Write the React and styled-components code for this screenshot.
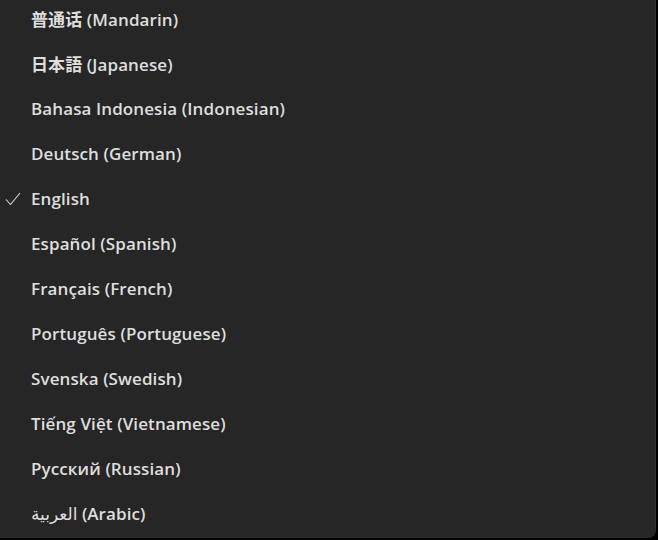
import React from "react";
import styled, { createGlobalStyle } from "styled-components";

const Global = createGlobalStyle`
  html, body { margin: 0; padding: 0; background: #000; overflow: hidden; }
  body { font-family: "Open Sans", "DejaVu Sans", "Noto Sans CJK SC", sans-serif; }
`;

const Panel = styled.ul`
  list-style: none;
  margin: -4px 0 0 0;
  padding: 0;
  width: 656px;
  height: 542px;
  box-sizing: border-box;
  background: #262626;
  border-radius: 0 0 8px 0;
  border-right: 1px solid #2e2e2e;
  border-bottom: 1px solid #2e2e2e;
`;

const Item = styled.li`
  position: relative;
  height: 45px;
  display: flex;
  align-items: center;
  padding-left: 31px;
  color: #dedede;
  font-size: 17px;
  font-weight: 600;
  font-family: ${(p) => p.$font || `"Open Sans", "DejaVu Sans", sans-serif`};
  letter-spacing: 0.1px;
  white-space: nowrap;
`;

const Native = styled.span`
  font-weight: ${(p) => (p.$light ? 400 : "inherit")};
`;

const Check = styled.svg`
  position: absolute;
  left: 5px;
  top: 50%;
  transform: translateY(-50%);
  width: 16px;
  height: 16px;
`;

const items = [
  { native: "普通话", en: "(Mandarin)", font: `"Open Sans", "Noto Sans CJK SC", sans-serif` },
  { native: "日本語", en: "(Japanese)", font: `"Open Sans", "Noto Sans CJK JP", sans-serif` },
  { native: "Bahasa Indonesia", en: "(Indonesian)" },
  { native: "Deutsch", en: "(German)" },
  { native: "English", checked: true },
  { native: "Español", en: "(Spanish)" },
  { native: "Français", en: "(French)" },
  { native: "Português", en: "(Portuguese)" },
  { native: "Svenska", en: "(Swedish)" },
  { native: "Tiếng Việt", en: "(Vietnamese)" },
  { native: "Русский", en: "(Russian)" },
  { native: "العربية", en: "(Arabic)", light: true },
];

export default function App() {
  return (
    <>
      <Global />
      <Panel>
        {items.map((it) => (
          <Item key={it.native} $font={it.font}>
            {it.checked && (
              <Check viewBox="0 0 16 16" fill="none">
                <path d="M1 8.5 L5.5 13.5 L15 2" stroke="#d8d8d8" strokeWidth="1.1" />
              </Check>
            )}
            <span dir="ltr">
              <Native $light={it.light}>{it.native}</Native>
              {it.en ? ` ${it.en}` : ""}
            </span>
          </Item>
        ))}
      </Panel>
    </>
  );
}
